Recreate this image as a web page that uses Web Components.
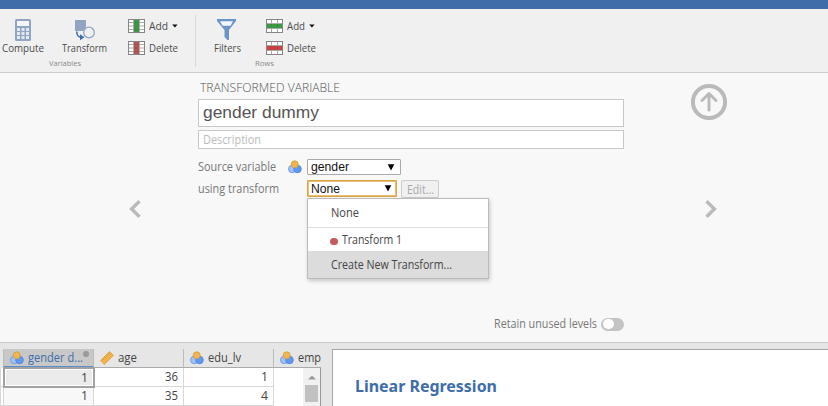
<!DOCTYPE html>
<html lang="en"><head><meta charset="utf-8"><title>Transformed variable</title>
<style>html,body{margin:0;height:100%;overflow:hidden}body{font-family:"Open Sans","Noto Sans",sans-serif;font-size:12px;color:#555}</style></head>
<body><stat-app></stat-app>
<script>
function define(name, html, setup) {
  customElements.define(name, class extends HTMLElement {
    connectedCallback() {
      if (this.shadowRoot) return;
      this.attachShadow({mode: 'open'}).innerHTML = html;
      if (setup) setup(this, this.shadowRoot);
    }
  });
}

/* Text condensed to a given width: w = width, s = font size */
define('fit-text', `<style>:host{display:block;white-space:nowrap;line-height:16px}span{display:inline-block;transform-origin:0 50%}</style><span></span>`, (el, root) => {
  const s = root.querySelector('span');
  s.textContent = el.getAttribute('t');
  el.style.fontSize = el.getAttribute('s') + 'px';
  const w = +el.getAttribute('w');
  const natural = s.getBoundingClientRect().width;
  s.style.transform = 'scaleX(' + w / natural + ')';
  el.style.width = w + 'px';
});

const tableIcon = (k, c) => `<svg width="17" height="14" viewBox="0 0 17 14"><rect x=".5" y=".5" width="16" height="13" fill="#fff"/>
${k === 'col' ? `<path d="M5.5 .5v13M11.5 .5v13M.5 3.5h16M.5 7h16M.5 10.5h16" stroke="#aaa"/><rect x="6" y="1" width="5" height="12" fill="${c}"/><path d="M6 3.5h5M6 7h5M6 10.5h5" stroke="#555" stroke-opacity=".35"/>`
: `<path d="M.5 4.5h16M.5 9.5h16M5.5 .5v13M11.5 .5v13" stroke="#aaa"/><rect x="1" y="5" width="15" height="4" fill="${c}"/><path d="M5.5 5v4M11.5 5v4" stroke="#555" stroke-opacity=".3"/>`}
<rect x=".5" y=".5" width="16" height="13" fill="none" stroke="#858585"/></svg>`;
const icons = {
  compute: `<svg width="16" height="22" viewBox="0 0 16 22"><rect width="16" height="22" rx="1.5" fill="#91a4c2"/><path d="M2 2h12v5H2z" fill="#f5f6f8"/><g fill="#e4e9f1"><path d="M2 9h3v3H2zM6.5 9h3v3h-3zM11 9h3v3h-3zM2 13h3v3H2zM6.5 13h3v3h-3zM11 13h3v3h-3zM2 17h3v3H2zM6.5 17h3v3h-3zM11 17h3v3h-3z"/></g></svg>`,
  transform: `<svg width="22" height="22" viewBox="0 0 22 22"><path d="M1 1h11v7L9 12H1z" fill="#91a4c2"/><circle cx="15" cy="13.500" r="5.3" fill="#f0f0f0" stroke="#91a4c2" stroke-width="1.3"/><path d="M2.8 12.500c0 4 1 5.600 4.500 5.800" fill="none" stroke="#3e6da9" stroke-width="1.6"/><path d="M6 15.300l4.500 3L6 21.300z" fill="#3e6da9"/></svg>`,
  filter: `<svg width="20" height="22" viewBox="0 0 20 22"><path d="M0 0h19v2l-7 9v10H10.500l-3-3v-7L0 2z" fill="#6a95cb"/><path d="M3 2.200h13l-2.500 4.600H5.600z" fill="#f4f6fa"/></svg>`,
  nominal: `<svg width="14" height="14" viewBox="0 0 14 14"><circle cx="4.200" cy="9" r="3.700" fill="#a3c2f4" stroke="#6291dc" stroke-width=".8"/><circle cx="9.500" cy="9" r="3.800" fill="#6298ee" stroke="#4b83dc" stroke-width=".8"/><circle cx="6.700" cy="4.300" r="3.500" fill="#f0b654" stroke="#d29b3b" stroke-width=".8"/></svg>`,
  ruler: `<svg width="14" height="14" viewBox="0 0 14 14"><path d="M.5 9.500L9.700.5l3.800 4L4.300 13.500z" fill="#f2b44d" stroke="#dda03b" stroke-width=".8"/><path d="M2.600 7.500l1.500 1.500M4.600 5.500l2 2M6.700 3.500l1.500 1.500M8.600 1.700l2 2" stroke="#c8923a" stroke-width=".8"/></svg>`,
  coladd: tableIcon('col', '#3a9b40'), coldel: tableIcon('col', '#bb544c'),
  rowadd: tableIcon('row', '#3a9b40'), rowdel: tableIcon('row', '#cf4242'),
  caret: `<svg width="6" height="4"><path d="M.2.400h5.400L2.900 3.400z" fill="#111"/></svg>`,
  arrow: `<svg width="8" height="7"><path d="M.7.300h6.600L4 6.400z" fill="#000"/></svg>`,
  up: `<svg width="38" height="38" viewBox="0 0 38 38" fill="none" stroke="#bababa"><circle cx="19" cy="19" r="16.100" stroke-width="4"/><path d="M19 27V11M12 17.500l7-7 7 7" stroke-width="3" stroke-linecap="round" stroke-linejoin="round"/></svg>`,
  left: `<svg width="12" height="18" fill="none" stroke="#bababa" stroke-width="3.400"><path d="M10.500 1.200L2.600 9l7.900 7.800"/></svg>`,
  right: `<svg width="12" height="18" fill="none" stroke="#bababa" stroke-width="3.400"><path d="M1.500 1.200L9.400 9l-7.900 7.800"/></svg>`
};
define('ui-icon', `<style>:host{display:block;flex:none}svg{display:block}</style>`, (el, root) => {
  root.innerHTML += icons[el.getAttribute('name')];
});

define('tool-button', `<style>:host{display:flex;flex-direction:column;align-items:center;color:#4c4c4c}div{height:22px;margin-bottom:-1px}</style><div><slot name="icon"></slot></div><slot></slot>`);
define('tool-action', `<style>:host{display:flex;align-items:center;height:14px;color:#4c4c4c;gap:4px}ui-icon{flex:none}</style><slot></slot>`);

define('tool-ribbon', `<style>
:host{display:block;border-top:9px solid #3e6da9;border-bottom:1px solid #ccc;background:#f0f0f0;height:63px}
main{display:flex;height:63px;box-sizing:border-box;padding-top:10px}
.vars{width:195px;display:grid;grid-template-columns:46px 77px 72px;grid-template-rows:38px 12px}
.rows{width:140px;display:grid;grid-template-columns:62px 78px;grid-template-rows:38px 12px}
.sep{width:1px;height:52px;margin-top:-4px;background:#d8d8d8}
.acts{display:grid;grid-template-rows:14px 14px;gap:8px;padding-left:5px}
.rows .acts{padding-left:8px}
.cap{color:#888;grid-column:1/-1}
.cap fit-text{line-height:12px}
</style><main><section class="vars">
<tool-button><ui-icon slot="icon" name="compute"></ui-icon><fit-text t="Compute" w="42" s="10.5"></fit-text></tool-button>
<tool-button><ui-icon slot="icon" name="transform"></ui-icon><fit-text t="Transform" w="45" s="10.5"></fit-text></tool-button>
<div class="acts"><tool-action><ui-icon name="coladd"></ui-icon><fit-text t="Add" w="19" s="10"></fit-text><ui-icon name="caret"></ui-icon></tool-action>
<tool-action><ui-icon name="coldel"></ui-icon><fit-text t="Delete" w="29" s="10"></fit-text></tool-action></div>
<div class="cap" style="padding-left:49px"><fit-text t="Variables" w="32" s="7.8"></fit-text></div></section>
<i class="sep"></i><section class="rows">
<tool-button><ui-icon slot="icon" name="filter"></ui-icon><fit-text t="Filters" w="27" s="10.5"></fit-text></tool-button>
<div class="acts"><tool-action><ui-icon name="rowadd"></ui-icon><fit-text t="Add" w="18" s="10"></fit-text><ui-icon name="caret"></ui-icon></tool-action>
<tool-action><ui-icon name="rowdel"></ui-icon><fit-text t="Delete" w="29" s="10"></fit-text></tool-action></div>
<div class="cap" style="padding-left:59px"><fit-text t="Rows" w="19" s="7.8"></fit-text></div></section></main>`);

define('select-box', `<style>:host{display:flex;box-sizing:border-box;align-items:center;justify-content:space-between;background:#fff;border:1px solid #aaa;border-radius:1px;height:16px;width:94px;padding:0 5px 0 3px;font-family:"Liberation Sans",Arial,sans-serif;color:#111}
:host([focused]){width:90px;height:17px;border:1px solid #d9a441;box-shadow:inset 0 0 0 1px #e6bf78;padding-right:4px}</style><slot></slot><ui-icon name="arrow"></ui-icon>`);

define('transform-menu', `<style>
:host{position:absolute;left:109px;top:125px;box-sizing:border-box;width:182px;height:81px;background:#fff;border:1px solid #bbb;box-shadow:1px 2px 4px #0003;color:#444}
div{box-sizing:border-box;display:flex;align-items:center;padding-left:22.500px}
.a{height:29px;border-bottom:1px solid #ddd}.b{height:23px;gap:4px;padding-left:22px}.c{height:27px;background:#dcdcdc}
i{width:8px;height:7px;border-radius:4px;background:#c45c5c;margin-top:3px}
</style><div class="a"><fit-text t="None" w="28" s="12"></fit-text></div><div class="b"><i></i><fit-text t="Transform 1" w="60" s="12"></fit-text></div><div class="c"><fit-text t="Create New Transform..." w="121" s="12"></fit-text></div>`);

define('variable-editor', `<style>
:host{display:grid;grid-template-columns:198px 426px 1fr;height:269px;background:#f8f8f8;border-bottom:1px solid #c8c8c8;color:#777}
.mid{position:relative;display:flex;flex-direction:column}
.title{padding:7px 0 3px 2px;color:#555;font-weight:300}
.box{box-sizing:border-box;background:#fff;border:1px solid #c8c8c8;display:flex;align-items:center;padding-left:3.500px}
.name{height:28px;font-family:"Liberation Sans",Arial,sans-serif;color:#555;margin-bottom:3px}
.desc{height:19px;color:#bbb;margin-bottom:10px}
.row{display:flex;height:17px}
.row>.lab{width:90px}.row>.ic{width:19px;padding-top:1px}
.edit{box-sizing:border-box;width:38px;height:18px;border:1px solid #ccc;border-radius:2px;background:#f0f0f0;color:#aaa;padding:1px 0 0 5px;margin-left:4px}
.retain{display:flex;justify-content:flex-end;gap:4px;align-items:center;margin-top:119px}
.tog{box-sizing:border-box;width:23px;height:13px;border-radius:7px;background:#c4c4c4;padding:1.500px}
.tog i{display:block;width:11px;height:10px;border-radius:5px;background:#fff}
.side{padding:127px 0 0 129px}.right{display:flex;flex-direction:column;padding:10px 0 0 66px}.right :last-child{margin:79px 0 0 15px}
</style><div class="side"><ui-icon name="left"></ui-icon></div><div class="mid">
<div class="title"><fit-text t="TRANSFORMED VARIABLE" w="140" s="12.5"></fit-text></div>
<div class="box name"><fit-text t="gender dummy" w="116" s="17"></fit-text></div>
<div class="box desc"><fit-text t="Description" w="58" s="12"></fit-text></div>
<div class="row" style="margin-bottom:4px"><div class="lab"><fit-text t="Source variable" w="78" s="12"></fit-text></div><div class="ic"><ui-icon name="nominal"></ui-icon></div><select-box><fit-text t="gender" w="38" s="12.5"></fit-text></select-box></div>
<div class="row"><div class="lab" style="padding-top:1px"><fit-text t="using transform" w="81" s="12"></fit-text></div><div class="ic"></div><select-box focused><fit-text t="None" w="29" s="12.5"></fit-text></select-box><div class="edit"><fit-text t="Edit..." w="27" s="12"></fit-text></div></div>
<div class="retain"><fit-text t="Retain unused levels" w="103" s="12"></fit-text><div class="tog"><i></i></div></div>
<transform-menu></transform-menu></div>
<div class="right"><ui-icon name="up"></ui-icon><ui-icon name="right"></ui-icon></div>`);

define('data-grid', `<style>
:host{display:block;width:321px;padding-top:6px;color:#444}
.g{display:grid;grid-template-columns:3px 90px 90px 90px 48px;grid-template-rows:19px 19px 19px}
.g>div{box-sizing:border-box;display:flex;align-items:center}
.h{border-left:1px solid #bbb;border-bottom:1px solid #aaa;gap:4px;padding-left:6px;overflow:hidden}
.first{border-left:0;border-bottom:0}
.active{background:#c8c8c8;color:#3e6da9;border-bottom:2px solid #5c8cc9;position:relative}
.active i{position:absolute;right:4px;top:2px;width:6px;height:6px;border-radius:3px;background:#999}
.c{background:#fff;border-left:1px solid #d8d8d8;border-bottom:1px solid #d8d8d8;justify-content:flex-end;padding-right:5px}
.g>.sel{background:#ebebeb;box-shadow:inset 0 0 0 1px #fff;z-index:1;border:2px solid #a2a2a2;margin:-1px -2px -1px 0}
.g>.bar{grid-column:5;grid-row:2/4;background:#fff;border-left:1px solid #d8d8d8;border-right:1px solid #999;justify-content:flex-end;z-index:1}
.track{width:17px;height:38px;background:#f1f1f1;display:flex;flex-direction:column;align-items:center;box-sizing:border-box;padding-top:7px;gap:5px}
.track i{width:13px;height:17px;background:#c1c1c1}
.track svg{display:block}
</style><div class="g"><div></div>
<div class="h active"><ui-icon name="nominal"></ui-icon><fit-text t="gender d..." w="55" s="12"></fit-text><i></i></div>
<div class="h"><ui-icon name="ruler"></ui-icon><fit-text t="age" w="19" s="12"></fit-text></div>
<div class="h"><ui-icon name="nominal"></ui-icon><fit-text t="edu_lv" w="33" s="12"></fit-text></div>
<div class="h"><ui-icon name="nominal"></ui-icon><fit-text t="emp" w="23" s="12"></fit-text></div>
<div class="c"></div><div class="c sel"><fit-text t="1" w="7" s="12"></fit-text></div><div class="c"><fit-text t="36" w="13" s="12"></fit-text></div><div class="c"><fit-text t="1" w="7" s="12"></fit-text></div>
<div class="bar"><div class="track"><svg width="8" height="5"><path d="M0 4.500h8L4 .5z" fill="#999"/></svg><i></i></div></div>
<div class="c"></div><div class="c" style="background:#f8f8f8"><fit-text t="1" w="7" s="12"></fit-text></div><div class="c"><fit-text t="35" w="13" s="12"></fit-text></div><div class="c"><fit-text t="4" w="7" s="12"></fit-text></div>
</div>`);

define('results-panel', `<style>:host{display:block;flex:1;margin:6px 0 0 11px;background:#fff;border:1px solid #a6a6a6;border-right:0;border-bottom:0;color:#3e6da9;font-weight:700;font-family:"Noto Sans",sans-serif}
fit-text{margin:27px 0 0 22px;line-height:18px}</style><fit-text t="Linear Regression" w="142" s="16.5"></fit-text>`);

define('stat-app', `<style>:host{display:flex;flex-direction:column;height:406px;background:#e6e6e6;overflow:hidden}footer{display:flex;flex:1;min-height:0}</style>
<tool-ribbon></tool-ribbon><variable-editor></variable-editor><footer><data-grid></data-grid><results-panel></results-panel></footer>`);
</script></body></html>
